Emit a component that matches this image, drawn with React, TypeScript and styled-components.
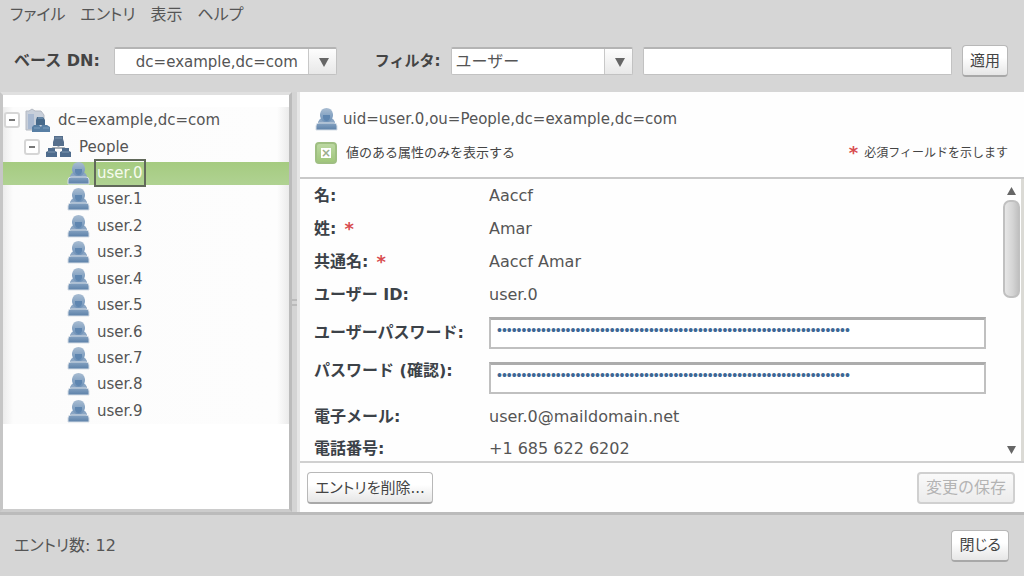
import React from "react";
import styled, { createGlobalStyle, css } from "styled-components";

const GlobalStyle = createGlobalStyle`
  *, *::before, *::after { box-sizing: border-box; }
  body {
    margin: 0;
    background: #d6d6d6;
    color: #555;
    font: 15px/20px "DejaVu Sans", "Noto Sans CJK JP", sans-serif;
  }
  button, input, select { font: inherit; color: inherit; margin: 0; }
`;

const Window = styled.div`
  display: flex;
  flex-direction: column;
  height: 100vh;
`;

const MenuBar = styled.nav`
  display: flex;
  gap: 15px;
  padding: 5px 10px;
`;

const MenuItem = styled.button`
  border: 0;
  padding: 0;
  background: none;
  font-size: 16px;
  line-height: 20px;
  font-feature-settings: "palt";
`;

const Toolbar = styled.form`
  display: flex;
  align-items: center;
  height: 62px;
  padding: 0 16px 0 14px;
  gap: 10px;
`;

const ToolLabel = styled.label<{ $spaced?: boolean }>`
  font-size: ${(p) => (p.$spaced ? 15 : 16)}px;
  font-weight: bold;
  color: #444;
  white-space: nowrap;
  margin-left: ${(p) => (p.$spaced ? 28 : 0)}px;
  margin-right: ${(p) => (p.$spaced ? 0 : 4)}px;
`;

const SelectBox = styled.span<{ $width: number }>`
  position: relative;
  flex: 0 0 auto;
  width: ${(p) => p.$width}px;
  height: 28px;
`;

const Select = styled.select<{ $indent: number; $size: number }>`
  appearance: none;
  width: 100%;
  height: 28px;
  padding: 0 30px 0 ${(p) => p.$indent}px;
  border: 1px solid #c2c2c2;
  border-top: 2px solid #b4b4b4;
  border-radius: 2px;
  background: #fff;
  font-size: ${(p) => p.$size}px;
  line-height: 24px;
`;

const SelectArrow = styled.span`
  position: absolute;
  top: 2px;
  right: 1px;
  bottom: 1px;
  width: 28px;
  display: grid;
  place-items: center;
  padding-left: 4px;
  border-left: 1px solid #c8c8c8;
  background: linear-gradient(#fdfdfd, #e8e8e8);
  pointer-events: none;
`;

const FilterInput = styled.input`
  flex: 1;
  min-width: 0;
  height: 28px;
  border: 1px solid #c2c2c2;
  border-top: 2px solid #b4b4b4;
  border-radius: 2px;
  background: #fff;
`;

const Button = styled.button`
  height: 32px;
  padding: 0 7px;
  border: 1px solid #b8b8b8;
  border-bottom: 2px solid #a8a8a8;
  border-radius: 4px;
  background: linear-gradient(#fff 40%, #e6e6e6);
  color: #444;
  font-size: 15px;
  line-height: 20px;
  white-space: nowrap;
  font-feature-settings: "palt";
  &:disabled {
    font-size: 16px;
    font-feature-settings: normal;
    border: 2px solid #d0d0d0;
    background: linear-gradient(#fafafa, #ececec);
    color: #b4b4b4;
  }
`;

const Main = styled.main`
  display: flex;
  flex: 1;
  min-height: 0;
  border-bottom: 3px solid #bbb;
`;

const TreePane = styled.section`
  flex: 0 0 292px;
  border: 3px solid #bbb;
  border-top-color: #e0e0e0;
  border-left-color: #c6c6c6;
  border-bottom-color: #ccc;
  padding-top: 12px;
  background: #fff;
`;

const Tree = styled.ul`
  display: grid;
  grid-template-rows: repeat(12, minmax(0, 1fr));
  height: 317px;
  margin: 0;
  padding: 0;
  list-style: none;
  background: linear-gradient(
    90deg,
    #ececec,
    #fcfcfc 10px,
    #fdfdfd calc(100% - 12px),
    #ebebeb
  );
`;

const TreeRow = styled.li<{ $level: number; $selected?: boolean }>`
  display: flex;
  align-items: center;
  padding-left: ${(p) => [1, 21, 64][p.$level]}px;
  ${(p) =>
    p.$selected &&
    css`
      background: linear-gradient(#a5cb80, #b0d292) center / 100% 23px no-repeat;
      color: #f6fbef;
    `}
`;

const Toggle = styled.button`
  display: grid;
  place-items: center;
  flex: 0 0 16px;
  height: 16px;
  margin-right: 5px;
  padding: 0;
  border: 2px solid #d6d6d6;
  border-radius: 3px;
  background: #fff;
  &::before {
    content: "";
    width: 6px;
    height: 2px;
    background: #777;
  }
`;

const TreeText = styled.span<{ $selected?: boolean }>`
  margin-left: 4px;
  padding: 2px 1px;
  border: 2px solid ${(p) => (p.$selected ? "#61695a" : "transparent")};
`;

const Divider = styled.div`
  display: grid;
  align-content: center;
  gap: 3px;
  flex: 0 0 8px;
  background: linear-gradient(90deg, #d4d4d4 5px, #e6e6e6 5px);
  &::before,
  &::after {
    content: "";
    width: 5px;
    height: 2px;
    background: #bbb;
  }
`;

const EntryPane = styled.section`
  display: flex;
  flex-direction: column;
  flex: 1;
  min-width: 0;
  background: #fefefe;
`;

const EntryHeader = styled.header`
  padding: 14px 16px 13px 15px;
  border-bottom: 2px solid #c9c9c9;
`;

const EntryTitle = styled.h1`
  display: flex;
  align-items: center;
  gap: 5px;
  height: 26px;
  margin: 0 0 10px;
  font-size: 15px;
  font-weight: normal;
`;

const OptionRow = styled.div`
  display: flex;
  align-items: center;
  justify-content: space-between;
  height: 22px;
`;

const CheckLabel = styled.label`
  display: flex;
  align-items: center;
  gap: 9px;
  font-size: 13px;
  color: #444;
`;

const Check = styled.input`
  appearance: none;
  display: grid;
  place-items: center;
  width: 22px;
  height: 22px;
  border: 2px solid #9fbf82;
  border-radius: 4px;
  background: linear-gradient(#bcd8a2, #a0c67b);
  &:checked::before {
    content: "×";
    width: 10px;
    height: 10px;
    background: #fff;
    color: #9cae8c;
    font: bold 12px/10px "DejaVu Sans", sans-serif;
    text-align: center;
  }
`;

const Note = styled.p`
  display: flex;
  gap: 6px;
  margin: 0;
  font-size: 12px;
  color: #444;
`;

const Star = styled.span`
  color: #d84b4f;
  font-size: 18px;
  font-weight: bold;
`;

const ScrollArea = styled.div`
  display: flex;
  flex: 1;
  min-height: 0;
  overflow: hidden;
  border-right: 3px solid #dbdad5;
`;

const Fields = styled.div`
  flex: 1;
  padding-left: 14px;
`;

const Field = styled.div<{ $height: number; $top?: boolean }>`
  display: grid;
  grid-template-columns: 175px 1fr;
  align-items: center;
  height: ${(p) => p.$height}px;
  ${(p) =>
    p.$top &&
    css`
      & > label {
        align-self: start;
        padding-top: 7px;
      }
    `}
`;

const fieldName = css`
  display: flex;
  gap: 8px;
  font-size: 16px;
  font-weight: bold;
  color: #3c4248;
`;

const FieldName = styled.span`
  ${fieldName}
`;

const FieldLabel = styled.label`
  ${fieldName}
`;

const FieldValue = styled.span`
  font-size: 16px;
`;

const PasswordInput = styled.input`
  width: calc(100% - 15px);
  height: 32px;
  padding: 0 6px 6px;
  border: 2px solid #c0c0c0;
  border-top: 3px solid #acacac;
  background: #fff;
  color: #3d6795;
  font: 14px/20px "Liberation Sans", sans-serif;
`;

const ScrollBar = styled.div`
  display: flex;
  flex-direction: column;
  align-items: center;
  flex: 0 0 20px;
  padding: 8px 0 7px;
`;

const Thumb = styled.div`
  width: 17px;
  height: 98px;
  margin: 4px 0 auto;
  border: 2px solid #c0c0c0;
  border-radius: 7px;
  background: linear-gradient(90deg, #e6e6e6, #d4d4d4 60%, #c2c2c2);
`;

const Actions = styled.div`
  display: flex;
  justify-content: space-between;
  padding: 9px 9px 8px 7px;
  border-top: 2px solid #d0d0d0;
`;

const Footer = styled.footer`
  display: flex;
  align-items: center;
  justify-content: space-between;
  height: 61px;
  padding: 0 15px 0 14px;
`;

const EntryCount = styled.span`
  font-size: 16px;
  font-feature-settings: "palt";
`;

const Arrow = ({ up = false, size = 9 }: { up?: boolean; size?: number }) => (
  <svg width={size} height={size} viewBox="0 0 10 10" aria-hidden="true">
    <path d={up ? "M5 0 10 9H0z" : "M0 1h10L5 10z"} fill="#666" />
  </svg>
);

const UserIcon = () => (
  <svg width="23" height="24" viewBox="0 0 23 24" aria-hidden="true">
    <defs>
      <linearGradient id="head" x1="0" y1="0" x2="0" y2="1">
        <stop offset="0" stopColor="#a9bdd2" />
        <stop offset="1" stopColor="#6c90b7" />
      </linearGradient>
      <linearGradient id="base" x1="0" y1="0" x2="0" y2="1">
        <stop offset="0" stopColor="#86a3c2" />
        <stop offset="1" stopColor="#5b80a8" />
      </linearGradient>
    </defs>
    <path d="M3 18v-3q1-3 4-4h9q3 1 4 4v3z" fill="#8aa5c3" />
    <path d="M1 23v-4q0-3 3-3h15q3 0 3 3v4z" fill="url(#base)" stroke="#d5dde6" />
    <path d="M5 9V7q1-6 6.500-6T18 7v2q-1 6-6.500 6T5 9z" fill="url(#head)" />
    <path d="M8 8h7v3q-1 3-3.500 3T8 11z" fill="#5f86b0" />
  </svg>
);

const GroupIcon = () => (
  <svg width="27" height="23" viewBox="0 0 27 23" aria-hidden="true">
    <path d="M13.500 9v5M5 16l3-3h11l3 3" fill="none" stroke="#a9afb5" strokeWidth="2" />
    <path d="M8 11V7l1-3V1h9v3l1 3v4z" fill="#566f8c" />
    <path d="M1 22v-5l2-1v-3h7v3l2 1v5zM15 22v-5l2-1v-3h7v3l2 1v5z" fill="#4f6c8d" />
    <path d="M10 3h7M3 17h7M17 17h7" stroke="#7f97b0" />
  </svg>
);

const DomainIcon = () => (
  <svg width="26" height="25" viewBox="0 0 26 25" aria-hidden="true">
    <path d="M1 22V3h3l3-2 3 2h6l3 4v15z" fill="#c8cfda" stroke="#b4b9c2" />
    <path d="M3 6h6v15H3z" fill="#a9b9d1" />
    <path d="M11 17v-5l1-3h6l2 3v5z" fill="#47698a" />
    <path d="M7 24v-5l2-2h5l2 2 1-2h5l3 2v5z" fill="#587fa4" />
    <path d="M13 10h5M9 20h6M18 20h6" stroke="#7d9fbd" />
  </svg>
);

const users = Array.from({ length: 10 }, (_, i) => `user.${i}`);
const password = "x".repeat(72);

export default function App() {
  return (
    <>
      <GlobalStyle />
      <Window>
        <MenuBar>
          {["ファイル", "エントリ", "表示", "ヘルプ"].map((m) => (
            <MenuItem key={m} type="button">{m}</MenuItem>
          ))}
        </MenuBar>
        <Toolbar onSubmit={(e) => e.preventDefault()}>
          <ToolLabel htmlFor="base-dn">ベース DN:</ToolLabel>
          <SelectBox $width={223}>
            <Select id="base-dn" $indent={21} $size={15}>
              <option>dc=example,dc=com</option>
            </Select>
            <SelectArrow><Arrow size={10} /></SelectArrow>
          </SelectBox>
          <ToolLabel htmlFor="filter" $spaced>フィルタ:</ToolLabel>
          <SelectBox $width={182}>
            <Select id="filter" $indent={4} $size={16}>
              <option>ユーザー</option>
            </Select>
            <SelectArrow><Arrow size={10} /></SelectArrow>
          </SelectBox>
          <FilterInput type="text" aria-label="フィルタ" />
          <Button type="submit">適用</Button>
        </Toolbar>
        <Main>
          <TreePane>
            <Tree>
              <TreeRow $level={0}>
                <Toggle type="button" aria-label="dc=example,dc=com" />
                <DomainIcon />
                <TreeText>dc=example,dc=com</TreeText>
              </TreeRow>
              <TreeRow $level={1}>
                <Toggle type="button" aria-label="People" />
                <GroupIcon />
                <TreeText>People</TreeText>
              </TreeRow>
              {users.map((u, i) => (
                <TreeRow key={u} $level={2} $selected={i === 0}>
                  <UserIcon />
                  <TreeText $selected={i === 0}>{u}</TreeText>
                </TreeRow>
              ))}
            </Tree>
          </TreePane>
          <Divider />
          <EntryPane>
            <EntryHeader>
              <EntryTitle>
                <UserIcon />
                uid=user.0,ou=People,dc=example,dc=com
              </EntryTitle>
              <OptionRow>
                <CheckLabel>
                  <Check type="checkbox" defaultChecked />
                  値のある属性のみを表示する
                </CheckLabel>
                <Note><Star>*</Star>必須フィールドを示します</Note>
              </OptionRow>
            </EntryHeader>
            <ScrollArea>
              <Fields>
                <Field $height={33}><FieldName>名:</FieldName><FieldValue>Aaccf</FieldValue></Field>
                <Field $height={33}><FieldName>姓: <Star>*</Star></FieldName><FieldValue>Amar</FieldValue></Field>
                <Field $height={33}><FieldName>共通名: <Star>*</Star></FieldName><FieldValue>Aaccf Amar</FieldValue></Field>
                <Field $height={33}><FieldName>ユーザー ID:</FieldName><FieldValue>user.0</FieldValue></Field>
                <Field $height={43}>
                  <FieldLabel htmlFor="pw">ユーザーパスワード:</FieldLabel>
                  <PasswordInput id="pw" type="password" defaultValue={password} />
                </Field>
                <Field $height={47} $top>
                  <FieldLabel htmlFor="pw2">パスワード (確認):</FieldLabel>
                  <PasswordInput id="pw2" type="password" defaultValue={password} />
                </Field>
                <Field $height={32}><FieldName>電子メール:</FieldName><FieldValue>user.0@maildomain.net</FieldValue></Field>
                <Field $height={32}><FieldName>電話番号:</FieldName><FieldValue>+1 685 622 6202</FieldValue></Field>
              </Fields>
              <ScrollBar>
                <Arrow up />
                <Thumb />
                <Arrow />
              </ScrollBar>
            </ScrollArea>
            <Actions>
              <Button type="button">エントリを削除...</Button>
              <Button type="button" disabled>変更の保存</Button>
            </Actions>
          </EntryPane>
        </Main>
        <Footer>
          <EntryCount>エントリ数: 12</EntryCount>
          <Button type="button">閉じる</Button>
        </Footer>
      </Window>
    </>
  );
}
